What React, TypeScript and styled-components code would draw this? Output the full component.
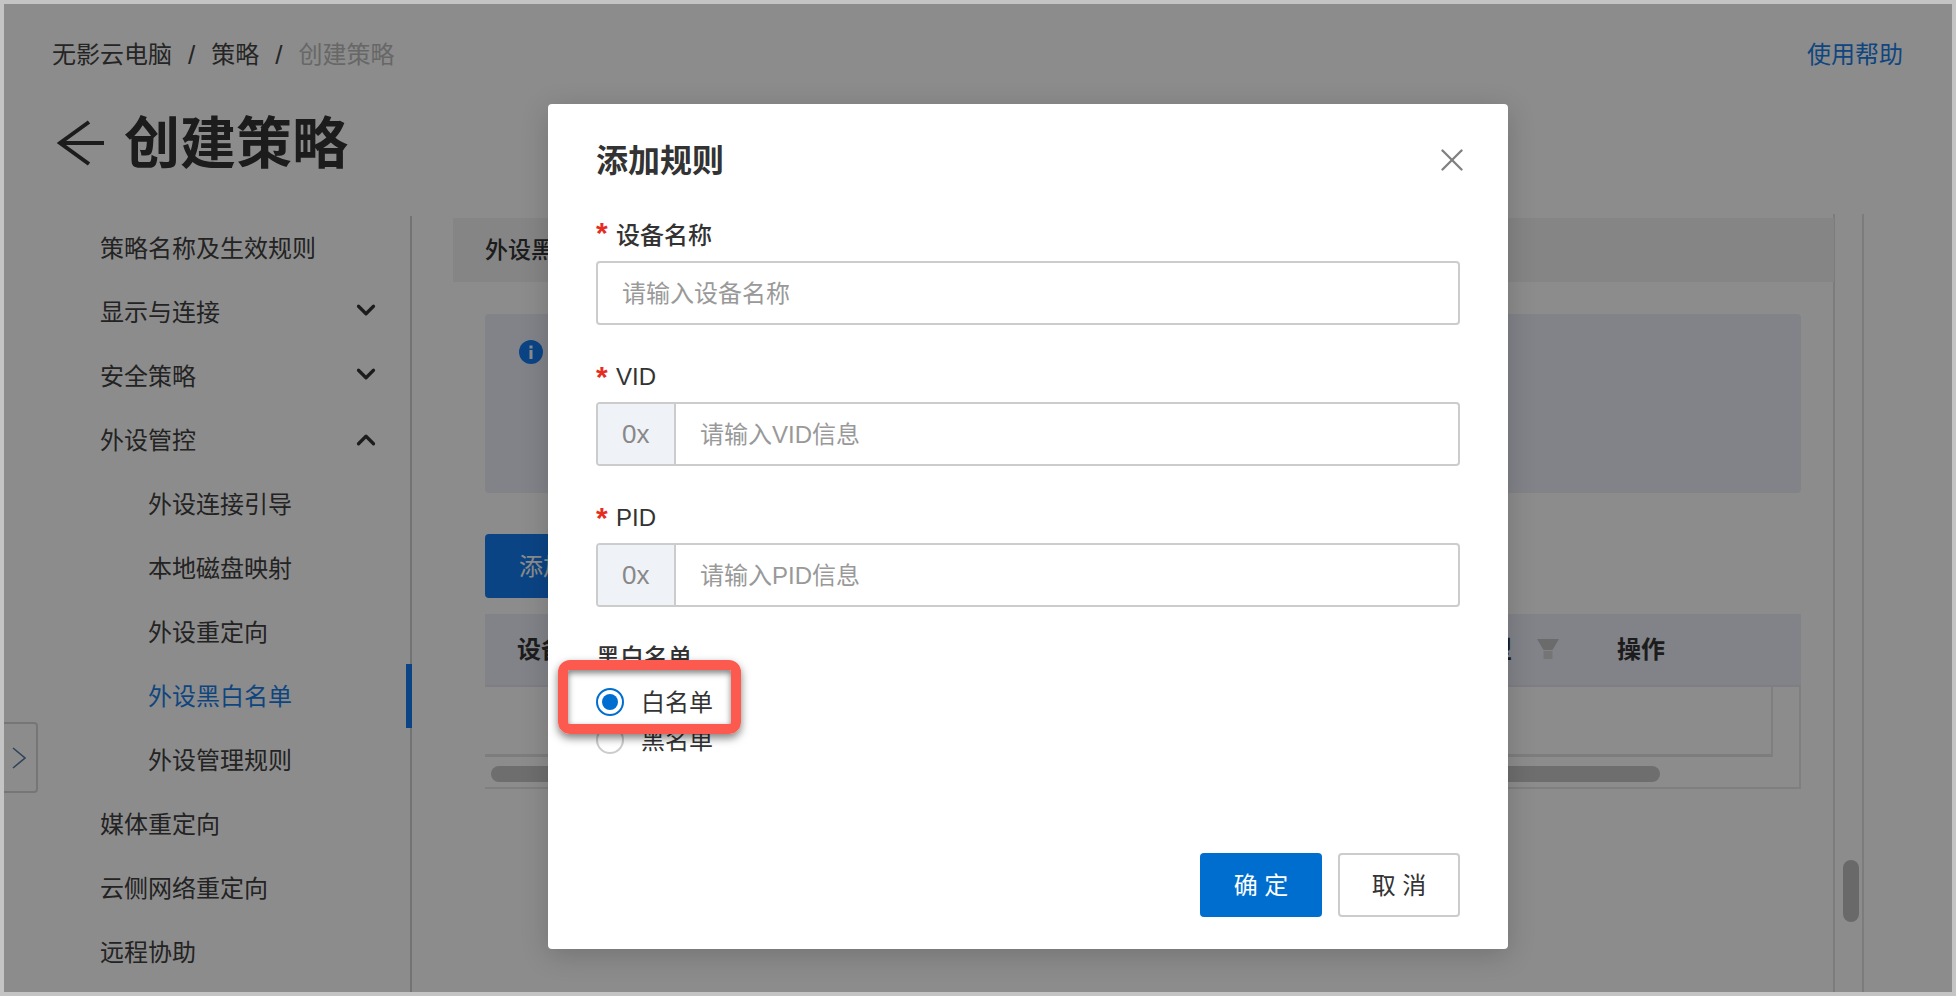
import { ChevronDown, ChevronUp, X } from "lucide-react";
import styled, { createGlobalStyle } from "styled-components";

const GlobalStyle = createGlobalStyle`
  html, body {
    margin: 0;
    padding: 0;
    background: #c4c4c4;
  }
  * {
    box-sizing: border-box;
  }
  body {
    font-family: "Liberation Sans", "Noto Sans CJK SC", sans-serif;
    color: #3a3a3a;
  }
`;

const Frame = styled.div`
  width: 1956px;
  height: 996px;
  padding: 4px;
  background: #c4c4c4;
  overflow: hidden;
`;
const Page = styled.div`
  position: relative;
  height: 988px;
  display: flex;
  flex-direction: column;
  background: #ffffff;
  overflow: hidden;
`;
const TopBar = styled.div`
  display: flex;
  justify-content: space-between;
  margin-top: 34px;
  padding: 0 49px 0 48px;
  font-size: 24px;
  line-height: 34px;
`;
const Breadcrumb = styled.div`
  display: flex;
  gap: 16px;
`;
const Crumb = styled.span<{ $current?: boolean }>`
  color: ${(props) => (props.$current ? "#bcbcbc" : "#444444")};
`;
const CrumbSlash = styled.span`
  color: #444444;
  font-size: 26px;
`;
const HelpLink = styled.a`
  color: #1a80e8;
`;
const TitleRow = styled.div`
  display: flex;
  align-items: center;
  gap: 19px;
  margin-top: 35px;
  padding-left: 53px;
  height: 72px;
`;
const PageTitle = styled.h1`
  margin: 2px 0 0;
  font-size: 56px;
  line-height: 72px;
  font-weight: 700;
  color: #333333;
`;
const Body = styled.div`
  flex: 1;
  display: flex;
  margin-top: 37px;
  min-height: 0;
`;
const Sidebar = styled.nav`
  width: 408px;
  flex-shrink: 0;
  padding-left: 96px;
  border-right: 2px solid #d2d2d2;
`;
const NavItem = styled.div<{ $sub?: boolean; $active?: boolean }>`
  position: relative;
  display: flex;
  justify-content: space-between;
  align-items: center;
  height: 64px;
  margin-right: -2px;
  padding-left: ${(props) => (props.$sub ? "48px" : "0")};
  padding-right: 31px;
  padding-bottom: 4px;
  font-size: 24px;
  color: ${(props) => (props.$active ? "#1d7ee8" : "#404040")};
  svg {
    color: #333333;
  }
`;
const OpenChevron = styled(ChevronUp)`
  margin-top: 4px;
`;
const ActiveMarker = styled.span`
  position: absolute;
  right: 0;
  top: 0;
  width: 6px;
  height: 64px;
  background: #147df2;
`;
const CollapseTab = styled.div`
  position: absolute;
  left: 0;
  top: 718px;
  width: 34px;
  height: 71px;
  display: flex;
  align-items: center;
  padding-left: 8px;
  border: 2px solid #d8d8d8;
  border-left: none;
  border-radius: 0 4px 4px 0;
  background: #ffffff;
`;
const Main = styled.main`
  flex: 1;
  display: flex;
  padding-left: 41px;
  min-width: 0;
`;
const Content = styled.div`
  width: 1382px;
  flex-shrink: 0;
  border-right: 2px solid #e2e2e2;
  margin-top: -2px;
  padding-top: 4px;
`;
const SectionBar = styled.div`
  height: 64px;
  margin-right: -1px;
  padding-left: 32px;
  padding-bottom: 4px;
  display: flex;
  align-items: center;
  background: #f3f3f3;
  font-size: 23px;
  font-weight: 500;
  color: #333333;
`;
const Panel = styled.div`
  padding: 32px 32px 0 32px;
`;
const InfoBox = styled.div`
  height: 179px;
  padding: 26px 34px;
  border-radius: 4px;
  background: #eceef9;
`;
const AddButton = styled.button`
  display: block;
  width: 170px;
  height: 64px;
  margin-top: 41px;
  padding: 0 0 4px 34px;
  border: none;
  border-radius: 4px;
  background: #147df2;
  color: #ffffff;
  font: inherit;
  font-size: 24px;
  text-align: left;
`;
const TableHead = styled.div`
  display: flex;
  justify-content: space-between;
  align-items: center;
  height: 73px;
  margin-top: 16px;
  padding: 0 136px 4px 32px;
  background: #eceef9;
  border-bottom: 2px solid #e6e6ee;
  font-size: 24px;
  font-weight: 600;
  color: #333333;
`;
const HeadRight = styled.div`
  display: flex;
  align-items: center;
`;
const FilterIcon = styled.svg`
  width: 22px;
  height: 20px;
  margin: 2px 58px 0 25px;
`;
const TableBox = styled.div`
  border-right: 2px solid #e8e8e8;
  border-bottom: 2px solid #e8e8e8;
`;
const TableEmpty = styled.div`
  height: 70px;
  margin-right: 26px;
  border-right: 2px solid #e8e8e8;
  border-bottom: 3px solid #e4e4e4;
`;
const ScrollTrack = styled.div`
  height: 30px;
  padding: 9px 0 0 6px;
`;
const ScrollThumb = styled.div`
  width: 1169px;
  height: 16px;
  border-radius: 8px;
  background: #c8c8c8;
`;
const Rail = styled.div`
  width: 29px;
  padding-left: 8px;
  border-right: 2px solid #e2e2e2;
  margin-top: -2px;
`;
const RailThumb = styled.div`
  width: 16px;
  height: 62px;
  margin-top: 646px;
  border-radius: 8px;
  background: #c0c0c0;
`;

const Mask = styled.div`
  position: absolute;
  inset: 0;
  padding: 100px 0 0 544px;
  background: rgba(0, 0, 0, 0.45);
`;
const Modal = styled.div`
  position: relative;
  display: flex;
  flex-direction: column;
  width: 960px;
  height: 845px;
  padding: 35px 48px 32px 48px;
  border-radius: 4px;
  background: #ffffff;
  box-shadow: 0 6px 28px rgba(0, 0, 0, 0.18);
`;
const ModalTitle = styled.h2`
  margin: 0 0 35px;
  font-size: 32px;
  line-height: 44px;
  font-weight: 600;
  color: #333333;
`;
const CloseButton = styled.span`
  position: absolute;
  top: 37px;
  right: 37px;
  display: flex;
  color: #808080;
`;
const Field = styled.div`
  margin-bottom: 34px;
`;
const FieldLabel = styled.div<{ $latin?: boolean }>`
  display: flex;
  align-items: center;
  height: 34px;
  margin-bottom: 9px;
  padding: ${(props) => (props.$latin ? "2px 0 0" : "0 0 4px")};
  font-size: 24px;
  font-weight: 500;
  color: #333333;
`;
const Required = styled.span`
  width: 20px;
  color: #e62e1f;
  font-size: 30px;
  line-height: 30px;
  font-weight: 700;
`;
const InputBox = styled.div`
  display: flex;
  align-items: center;
  height: 64px;
  border: 2px solid #cccccc;
  border-radius: 4px;
  font-size: 24px;
  color: #999999;
`;
const Addon = styled.span`
  align-self: stretch;
  display: flex;
  align-items: center;
  width: 78px;
  padding-left: 24px;
  background: #eff2f7;
  border-right: 2px solid #cccccc;
  border-radius: 2px 0 0 2px;
  font-size: 26px;
  color: #888888;
`;
const Placeholder = styled.span`
  padding: 0 0 3px 24px;
`;
const RadioLabel = styled.div`
  height: 34px;
  margin-bottom: 8px;
  font-size: 24px;
  line-height: 34px;
  font-weight: 500;
  color: #333333;
`;
const RadioRow = styled.div`
  display: flex;
  align-items: center;
  gap: 17px;
  height: 38px;
  font-size: 24px;
  color: #333333;
`;
const RadioText = styled.span`
  margin-top: -4px;
`;
const RadioDot = styled.span<{ $checked?: boolean }>`
  display: flex;
  align-items: center;
  justify-content: center;
  width: 28px;
  height: 28px;
  border-radius: 50%;
  border: 2px solid ${(props) => (props.$checked ? "#006ed0" : "#cccccc")};
  &::after {
    content: "";
    width: 16px;
    height: 16px;
    border-radius: 50%;
    background: ${(props) => (props.$checked ? "#006ed0" : "transparent")};
  }
`;
const Highlight = styled.div`
  position: absolute;
  left: 10px;
  top: 556px;
  width: 183px;
  height: 74px;
  border: 10px solid #fd5a4f;
  border-radius: 12px;
  box-shadow: 0 4px 8px rgba(0, 0, 0, 0.5), inset 0 3px 6px rgba(0, 0, 0, 0.5);
`;
const Footer = styled.div`
  display: flex;
  justify-content: flex-end;
  gap: 16px;
  margin-top: auto;
`;
const FooterButton = styled.button<{ $primary?: boolean }>`
  width: 122px;
  height: 64px;
  padding: 0 0 4px;
  border: ${(props) => (props.$primary ? "none" : "2px solid #cccccc")};
  border-radius: 4px;
  background: ${(props) => (props.$primary ? "#006ecf" : "#ffffff")};
  color: ${(props) => (props.$primary ? "#ffffff" : "#333333")};
  font: inherit;
  font-size: 24px;
`;

const navItems = [
  { label: "策略名称及生效规则" },
  { label: "显示与连接", icon: "down" },
  { label: "安全策略", icon: "down" },
  { label: "外设管控", icon: "up" },
  { label: "外设连接引导", sub: true },
  { label: "本地磁盘映射", sub: true },
  { label: "外设重定向", sub: true },
  { label: "外设黑白名单", sub: true, active: true },
  { label: "外设管理规则", sub: true },
  { label: "媒体重定向" },
  { label: "云侧网络重定向" },
  { label: "远程协助" },
];

function App() {
  return (
    <Frame>
      <GlobalStyle />
      <Page>
        <TopBar>
          <Breadcrumb>
            <Crumb>无影云电脑</Crumb>
            <CrumbSlash>/</CrumbSlash>
            <Crumb>策略</Crumb>
            <CrumbSlash>/</CrumbSlash>
            <Crumb $current>创建策略</Crumb>
          </Breadcrumb>
          <HelpLink>使用帮助</HelpLink>
        </TopBar>
        <TitleRow>
          <svg width="48" height="46" viewBox="0 0 48 46" fill="none" stroke="#333333" strokeWidth="4">
            <path d="M47 23H4M32 2L3 23l29 21" />
          </svg>
          <PageTitle>创建策略</PageTitle>
        </TitleRow>
        <Body>
          <Sidebar>
            {navItems.map((item) => (
              <NavItem key={item.label} $sub={item.sub} $active={item.active}>
                {item.label}
                {item.icon === "down" && <ChevronDown size={30} strokeWidth={2.6} />}
                {item.icon === "up" && <OpenChevron size={30} strokeWidth={2.6} />}
                {item.active && <ActiveMarker />}
              </NavItem>
            ))}
          </Sidebar>
          <Main>
            <Content>
              <SectionBar>外设黑白名单</SectionBar>
              <Panel>
                <InfoBox>
                  <svg width="24" height="24" viewBox="0 0 24 24">
                    <circle cx="12" cy="12" r="12" fill="#147df2" />
                    <rect x="10.5" y="10" width="3" height="9" fill="#ffffff" />
                    <rect x="10.5" y="5.5" width="3" height="3" fill="#ffffff" />
                  </svg>
                </InfoBox>
                <AddButton>添加规则</AddButton>
                <TableHead>
                  <span>设备名称</span>
                  <HeadRight>
                    <span>类型</span>
                    <FilterIcon viewBox="0 0 22 20">
                      <path d="M0 0h22l-6.500 11h-9z" fill="#c4c4c4" />
                      <rect x="6.500" y="12" width="9" height="8" fill="#d6d6d6" />
                    </FilterIcon>
                    <span>操作</span>
                  </HeadRight>
                </TableHead>
                <TableBox>
                  <TableEmpty />
                  <ScrollTrack>
                    <ScrollThumb />
                  </ScrollTrack>
                </TableBox>
              </Panel>
            </Content>
            <Rail>
              <RailThumb />
            </Rail>
          </Main>
        </Body>
        <CollapseTab>
          <svg width="14" height="22" viewBox="0 0 14 22" fill="none" stroke="#5a7a9e" strokeWidth="1.6">
            <path d="M1 1l12 10L1 21" />
          </svg>
        </CollapseTab>
        <Mask>
          <Modal>
            <ModalTitle>添加规则</ModalTitle>
            <CloseButton>
              <X size={38} strokeWidth={1.5} />
            </CloseButton>
            <Field>
              <FieldLabel>
                <Required>*</Required>设备名称
              </FieldLabel>
              <InputBox>
                <Placeholder>请输入设备名称</Placeholder>
              </InputBox>
            </Field>
            <Field>
              <FieldLabel $latin>
                <Required>*</Required>VID
              </FieldLabel>
              <InputBox>
                <Addon>0x</Addon>
                <Placeholder>请输入VID信息</Placeholder>
              </InputBox>
            </Field>
            <Field>
              <FieldLabel $latin>
                <Required>*</Required>PID
              </FieldLabel>
              <InputBox>
                <Addon>0x</Addon>
                <Placeholder>请输入PID信息</Placeholder>
              </InputBox>
            </Field>
            <RadioLabel>黑白名单</RadioLabel>
            <RadioRow>
              <RadioDot $checked />
              <RadioText>白名单</RadioText>
            </RadioRow>
            <RadioRow>
              <RadioDot />
              <RadioText>黑名单</RadioText>
            </RadioRow>
            <Footer>
              <FooterButton $primary>确 定</FooterButton>
              <FooterButton>取 消</FooterButton>
            </Footer>
            <Highlight />
          </Modal>
        </Mask>
      </Page>
    </Frame>
  );
}

export default App;
